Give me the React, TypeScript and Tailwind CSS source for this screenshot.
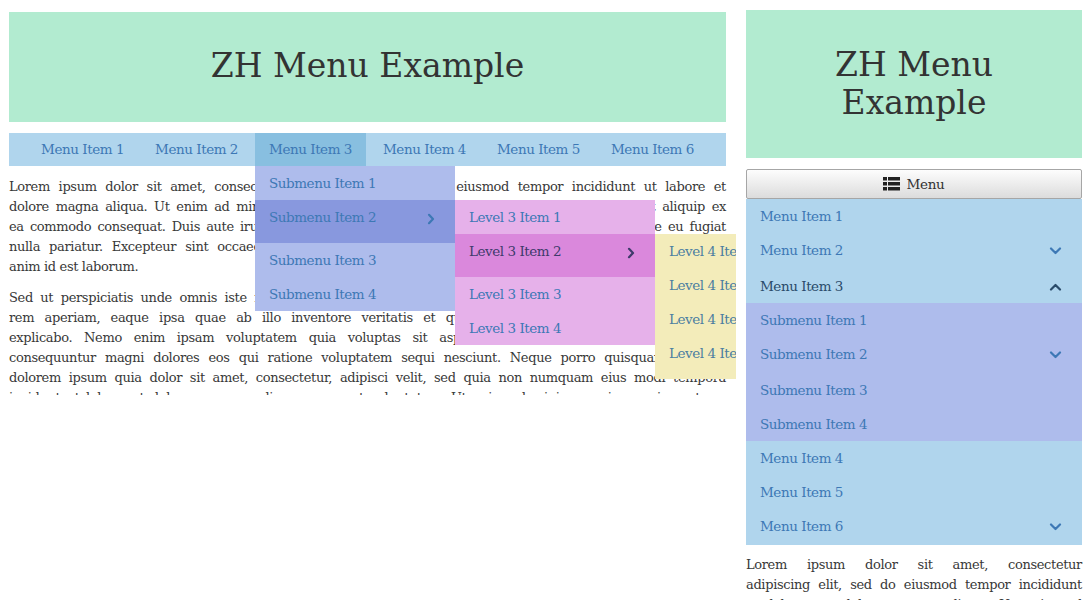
import React from "react";

const ChevronRight = ({ className }: { className: string }) => (
  <svg width="8" height="12" viewBox="0 0 8 12" fill="none" stroke="currentColor" strokeWidth="2.2" strokeLinecap="round" strokeLinejoin="round" className={className}>
    <path d="M2 1.8 L6 6 L2 10.2" />
  </svg>
);

const ChevronDown = ({ className, up }: { className: string; up?: boolean }) => (
  <svg width="13" height="8" viewBox="0 0 13 8" fill="none" stroke="currentColor" strokeWidth="2.2" strokeLinecap="round" strokeLinejoin="round" className={className}>
    {up ? <path d="M2 6.5 L6.5 2 L11 6.5" /> : <path d="M2 1.5 L6.5 6 L11 1.5" />}
  </svg>
);

const ListIcon = () => (
  <svg width="17" height="14" viewBox="0 0 17 14" fill="#222">
    <rect x="0" y="0" width="4" height="3.5" />
    <rect x="5" y="0" width="12" height="3.5" />
    <rect x="0" y="5" width="4" height="3.5" />
    <rect x="5" y="5" width="12" height="3.5" />
    <rect x="0" y="10" width="4" height="3.5" />
    <rect x="5" y="10" width="12" height="3.5" />
  </svg>
);

const Line = ({ children, last }: { children: React.ReactNode; last?: boolean }) => (
  <div className={last ? "whitespace-nowrap text-left" : "whitespace-nowrap text-justify [text-align-last:justify]"}>{children}</div>
);

const Level4 = () => (
  <div className="absolute left-full top-0 w-[200px] bg-[#f3ecba] text-[#4b7ea1]">
    <div className="h-[34px] pl-[14px] pt-[8px] leading-[18px]">Level 4 Item 1</div>
    <div className="h-[34px] pl-[14px] pt-[8px] leading-[18px]">Level 4 Item 2</div>
    <div className="h-[34px] pl-[14px] pt-[8px] leading-[18px]">Level 4 Item 3</div>
    <div className="h-[43px] pl-[14px] pt-[8px] leading-[18px]">Level 4 Item 4</div>
  </div>
);

const Level3 = () => (
  <div className="absolute left-full top-0 w-[200px] bg-[#e6b1ea] text-[#3d78b5]">
    <div className="h-[34px] pl-[14px] pt-[8px] leading-[18px]">Level 3 Item 1</div>
    <div className="relative h-[43px] bg-[#da88dc] pl-[14px] pr-[20px] pt-[8px] leading-[18px] flex justify-between items-start text-[#3e3a6b]">
      <span>Level 3 Item 2</span>
      <ChevronRight className="mt-[5px]" />
      <Level4 />
    </div>
    <div className="h-[34px] pl-[14px] pt-[8px] leading-[18px]">Level 3 Item 3</div>
    <div className="h-[34px] pl-[14px] pt-[8px] leading-[18px]">Level 3 Item 4</div>
  </div>
);

const Dropdown = () => (
  <div className="absolute left-0 top-full w-[200px] bg-[#aebcec] z-10">
    <div className="h-[34px] pl-[14px] pt-[8px] leading-[18px]">Submenu Item 1</div>
    <div className="relative h-[43px] bg-[#8898de] pl-[14px] pr-[20px] pt-[8px] leading-[18px] flex justify-between items-start">
      <span>Submenu Item 2</span>
      <ChevronRight className="mt-[5px]" />
      <Level3 />
    </div>
    <div className="h-[34px] pl-[14px] pt-[8px] leading-[18px]">Submenu Item 3</div>
    <div className="h-[34px] pl-[14px] pt-[8px] leading-[18px]">Submenu Item 4</div>
  </div>
);

const topItems = ["Menu Item 1", "Menu Item 2", "Menu Item 3", "Menu Item 4", "Menu Item 5", "Menu Item 6"];

const MRow = ({ text, chevron, up, dark }: { text: string; chevron?: boolean; up?: boolean; dark?: boolean }) => (
  <div className={`${chevron && !up ? "h-[36px]" : "h-[34px]"} pl-[14px] pr-[20px] pt-[8px] leading-[18px] flex justify-between items-start ${dark ? "text-[#2a4b6a]" : "text-[#3d78b5]"}`}>
    <span>{text}</span>
    {chevron && <ChevronDown className="mt-[6px]" up={up} />}
  </div>
);

export default function App() {
  return (
    <div className="flex bg-white min-h-screen font-['DejaVu_Serif',serif]">
      {/* Desktop view */}
      <div className="relative w-[736px] h-[395px] overflow-hidden shrink-0 pl-[9px] pr-[10px] pt-[12px]">
        <header className="h-[110px] bg-[#b2ebd0] flex items-center justify-center text-[33px] text-[#333] pb-[2px]">
          ZH Menu Example
        </header>
        <nav className="relative z-10 mt-[11px] h-[33px] bg-[#b0d5ed] flex justify-center gap-[3px] text-[13.5px] tracking-[-0.45px] text-[#3d78b5]">
          {topItems.map((t, i) => (
            <div key={t} className={`relative px-[14px] h-full flex items-center ${i === 2 ? "bg-[#88bfe0]" : ""}`}>
              {t}
              {i === 2 && <Dropdown />}
            </div>
          ))}
        </nav>
        <div className="mt-[11px] text-[13px] tracking-[-0.35px] leading-[20px] text-[#383838]">
          <div className="mb-[11px]">
            <Line>Lorem ipsum dolor sit amet, consectetur adipiscing elit, sed do eiusmod tempor incididunt ut labore et</Line>
            <Line>dolore magna aliqua. Ut enim ad minim veniam, quis nostrud exercitation ullamco laboris nisi ut aliquip ex</Line>
            <Line>ea commodo consequat. Duis aute irure dolor in reprehenderit in voluptate velit esse cillum dolore eu fugiat</Line>
            <Line>nulla pariatur. Excepteur sint occaecat cupidatat non proident, sunt in culpa qui officia deserunt mollit</Line>
            <Line last>anim id est laborum.</Line>
          </div>
          <div>
            <Line>Sed ut perspiciatis unde omnis iste natus error sit voluptatem accusantium doloremque laudantium, totam</Line>
            <Line>rem aperiam, eaque ipsa quae ab illo inventore veritatis et quasi architecto beatae vitae dicta sunt</Line>
            <Line>explicabo. Nemo enim ipsam voluptatem quia voluptas sit aspernatur aut odit aut fugit, sed quia</Line>
            <Line>consequuntur magni dolores eos qui ratione voluptatem sequi nesciunt. Neque porro quisquam est, qui</Line>
            <Line>dolorem ipsum quia dolor sit amet, consectetur, adipisci velit, sed quia non numquam eius modi tempora</Line>
            <Line>incidunt ut labore et dolore magnam aliquam quaerat voluptatem. Ut enim ad minima veniam, quis nostrum</Line>
          </div>
        </div>
      </div>

      {/* Mobile view */}
      <div className="ml-[10px] w-[336px] shrink-0 pt-[10px]">
        <header className="h-[148px] bg-[#b2ebd0] flex flex-col items-center justify-center text-[33px] leading-[38px] text-[#333]">
          <span>ZH Menu</span>
          <span>Example</span>
        </header>
        <button className="mt-[11px] w-full h-[30px] border border-[#a6a6a6] rounded-[2px] bg-[linear-gradient(to_bottom,#fdfdfd,#dcdcdc)] flex items-center justify-center gap-[6px] text-[13.5px] tracking-[-0.3px] text-[#333]">
          <ListIcon />
          <span>Menu</span>
        </button>
        <div className="bg-[#b0d5ed] text-[13.5px] tracking-[-0.45px]">
          <MRow text="Menu Item 1" />
          <MRow text="Menu Item 2" chevron />
          <MRow text="Menu Item 3" chevron up dark />
          <div className="bg-[#aebcec]">
            <MRow text="Submenu Item 1" />
            <MRow text="Submenu Item 2" chevron />
            <MRow text="Submenu Item 3" />
            <MRow text="Submenu Item 4" />
          </div>
          <MRow text="Menu Item 4" />
          <MRow text="Menu Item 5" />
          <MRow text="Menu Item 6" chevron />
        </div>
        <div className="mt-[10px] text-[13px] tracking-[-0.35px] leading-[20px] text-[#383838]">
          <Line>Lorem ipsum dolor sit amet, consectetur</Line>
          <Line>adipiscing elit, sed do eiusmod tempor incididunt</Line>
          <Line>ut labore et dolore magna aliqua. Ut enim ad</Line>
          <Line>minim veniam, quis nostrud exercitation ullamco</Line>
        </div>
      </div>
    </div>
  );
}
